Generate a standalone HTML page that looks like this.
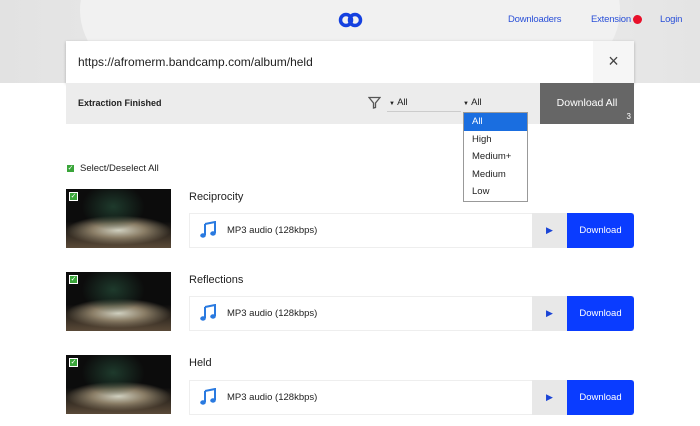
<!DOCTYPE html>
<html><head><style>
*{margin:0;padding:0;box-sizing:border-box}
body{width:700px;height:426px;overflow:hidden;background:#fff;font-family:"Liberation Sans",sans-serif;position:relative}
.hdr{position:absolute;left:0;top:0;width:700px;height:83px;overflow:hidden;background:linear-gradient(90deg,#e2e2e2,#ececec 40%,#efefef 60%,#e4e4e4)}
.hdr:before{content:"";position:absolute;left:80px;top:-120px;width:540px;height:260px;border-radius:50%;background:#f1f1f1}
.nav{position:absolute;top:14px;font-size:9.5px;color:#2a50d8;letter-spacing:-.2px}
.url{position:absolute;left:66px;top:41px;width:568px;height:42px;background:#fff;box-shadow:0 1px 3px rgba(0,0,0,.25)}
.url span{position:absolute;left:12px;top:14px;font-size:12px;color:#222}
.x{position:absolute;right:0;top:0;width:41px;height:42px;background:#f6f6f6;font-size:18px;color:#444;text-align:center;line-height:40px}
.bar{position:absolute;left:66px;top:83px;width:568px;height:41px;background:#ececec}
.da{position:absolute;left:540px;top:83px;width:94px;height:41px;background:#666;color:#fff;font-size:10.5px;text-align:center;line-height:40px}
.dd{position:absolute;left:463px;top:112px;width:65px;height:90px;border:1px solid #999;background:#fff;font-size:9.5px;color:#222}
.dd div{height:17.6px;line-height:17.6px;padding-left:8px}
.cb{position:absolute;width:9px;height:9px;background:#3aa53a;border:1px solid #fff;color:#fff;font-size:7px;line-height:7px;text-align:center}
.th{position:absolute;left:66px;width:105px;height:59px;background:radial-gradient(ellipse 30% 40% at 45% 30%,#1e3a2c 0,transparent 100%),radial-gradient(ellipse 50% 25% at 50% 70%,#cfcfbf 0,#8a7d66 50%,transparent 100%),linear-gradient(#0c0c0c 55%,#5a4a38)}
.ti{position:absolute;left:189px;font-size:11px;color:#222}
.fm{position:absolute;left:189px;width:445px;height:35px;border:1px solid #eee;background:#fff}
.fm span{position:absolute;left:37px;top:11px;font-size:9.5px;color:#222}
.pl{position:absolute;right:66px;top:-1px;width:35px;height:35px;background:#e8e8e8;color:#1a44d6;font-size:9px;text-align:center;line-height:35px}
.dl{position:absolute;right:-1px;top:-1px;width:67px;height:35px;background:#0a3cff;color:#fff;font-size:9.5px;text-align:center;line-height:35px;border-radius:0 3px 3px 0}
.note{position:absolute;left:10px;top:7px}
</style></head><body>
<div class="hdr"></div>
<svg style="position:absolute;left:338px;top:12px" width="26" height="16" viewBox="0 0 26 16"><circle cx="8" cy="8" r="5.5" fill="none" stroke="#1541e0" stroke-width="3.5"/><circle cx="17" cy="8" r="5.5" fill="none" stroke="#1541e0" stroke-width="3.5"/></svg>
<div class="nav" style="left:508px">Downloaders</div>
<div class="nav" style="left:591px">Extension</div>
<div style="position:absolute;left:633px;top:15px;width:9px;height:9px;border-radius:50%;background:#e8102a"></div>
<div class="nav" style="left:660px">Login</div>
<div class="url"><span>https://afromerm.bandcamp.com/album/held</span><div class="x">×</div></div>
<div class="bar">
<svg style="position:absolute;left:302px;top:13px" width="13" height="13" viewBox="0 0 13 13"><path d="M1 1.5h11L7.5 7v4.5L5.5 12V7z" fill="none" stroke="#555" stroke-width="1.3"/></svg>
<div style="position:absolute;left:12px;top:15px;font-size:9px;font-weight:bold;color:#222">Extraction Finished</div>
<div style="position:absolute;left:323px;top:14px;font-size:9.5px;color:#222"><span style="font-size:6px">▼</span> All</div>
<div style="position:absolute;left:321px;top:28px;width:74px;height:1px;background:#ccc"></div>
<div style="position:absolute;left:397px;top:14px;font-size:9.5px;color:#222"><span style="font-size:6px">▼</span> All</div>
</div>
<div class="da">Download All<span style="position:absolute;right:3px;bottom:-13px;font-size:8px">3</span></div>
<div class="dd"><div style="background:#1a6ee0;color:#fff">All</div><div>High</div><div>Medium+</div><div>Medium</div><div>Low</div></div>
<div class="cb" style="left:66px;top:164px">✓</div>
<div style="position:absolute;left:80px;top:163px;font-size:9.5px;color:#222">Select/Deselect All</div>

<div class="th" style="top:189px"></div><div class="cb" style="left:69px;top:192px">✓</div>
<div class="ti" style="top:191px">Reciprocity</div>
<div class="fm" style="top:213px"><svg class="note" width="17" height="18" viewBox="0 0 17 18"><path d="M5 3L15 1v11" fill="none" stroke="#2a7ae0" stroke-width="2"/><path d="M5 3v11" stroke="#2a7ae0" stroke-width="2"/><ellipse cx="3" cy="14.5" rx="2.8" ry="2.2" fill="#2a7ae0"/><ellipse cx="13" cy="12.5" rx="2.8" ry="2.2" fill="#2a7ae0"/></svg><span>MP3 audio (128kbps)</span><div class="pl">▶</div><div class="dl">Download</div></div>

<div class="th" style="top:272px"></div><div class="cb" style="left:69px;top:275px">✓</div>
<div class="ti" style="top:274px">Reflections</div>
<div class="fm" style="top:296px"><svg class="note" width="17" height="18" viewBox="0 0 17 18"><path d="M5 3L15 1v11" fill="none" stroke="#2a7ae0" stroke-width="2"/><path d="M5 3v11" stroke="#2a7ae0" stroke-width="2"/><ellipse cx="3" cy="14.5" rx="2.8" ry="2.2" fill="#2a7ae0"/><ellipse cx="13" cy="12.5" rx="2.8" ry="2.2" fill="#2a7ae0"/></svg><span>MP3 audio (128kbps)</span><div class="pl">▶</div><div class="dl">Download</div></div>

<div class="th" style="top:355px"></div><div class="cb" style="left:69px;top:358px">✓</div>
<div class="ti" style="top:357px">Held</div>
<div class="fm" style="top:380px"><svg class="note" width="17" height="18" viewBox="0 0 17 18"><path d="M5 3L15 1v11" fill="none" stroke="#2a7ae0" stroke-width="2"/><path d="M5 3v11" stroke="#2a7ae0" stroke-width="2"/><ellipse cx="3" cy="14.5" rx="2.8" ry="2.2" fill="#2a7ae0"/><ellipse cx="13" cy="12.5" rx="2.8" ry="2.2" fill="#2a7ae0"/></svg><span>MP3 audio (128kbps)</span><div class="pl">▶</div><div class="dl">Download</div></div>
</body></html>
